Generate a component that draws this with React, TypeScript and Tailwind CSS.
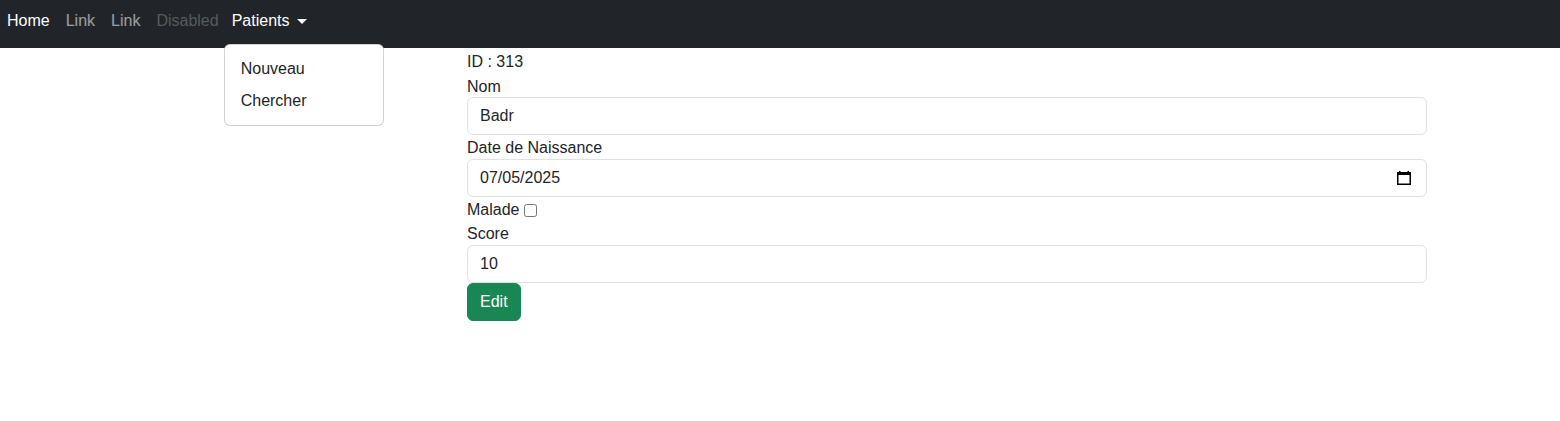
export default function App() {
  return (
    <div className="min-h-screen bg-white text-[#212529] text-base leading-6 font-['Segoe_UI','Liberation_Sans',sans-serif]">
      {/* Navbar */}
      <nav className="bg-[#212529] h-12 relative">
        <ul className="flex pt-[9px]">
          <li>
            <a className="block pl-[7px] pr-2 text-white">Home</a>
          </li>
          <li>
            <a className="block px-2 text-white/55">Link</a>
          </li>
          <li>
            <a className="block px-2 text-white/55">Link</a>
          </li>
          <li>
            <a className="block pl-2 pr-[6px] text-white/25">Disabled</a>
          </li>
          <li className="relative">
            <a className="flex items-center pl-[7px] pr-2 text-white">
              Patients
              <span className="ml-[8px] inline-block w-0 h-0 border-t-[5px] border-t-white border-x-[5px] border-x-transparent" />
            </a>
            <div className="absolute left-[-1px] top-[35px] w-40 bg-white border border-black/[0.175] rounded-md py-2 z-10">
              <a className="block px-4 py-1 text-[#212529]">Nouveau</a>
              <a className="block px-4 py-1 text-[#212529]">Chercher</a>
            </div>
          </li>
        </ul>
      </nav>

      {/* Form */}
      <div className="ml-[467px] w-[960px] pt-px">
        <div className="pt-px -mb-px">ID : 313</div>
        <label className="block pt-[2px] -mb-[2px]">Nom</label>
        <input
          type="text"
          defaultValue="Badr"
          className="block w-full h-[38px] px-3 border border-[#dee2e6] rounded-md outline-none"
        />
        <label className="block pt-px -mb-px">Date de Naissance</label>
        <div className="relative">
          <input
            type="text"
            defaultValue="07/05/2025"
            className="block w-full h-[38px] px-3 border border-[#dee2e6] rounded-md outline-none"
          />
          <svg
            className="absolute right-[16px] top-[12px]"
            width="14"
            height="14"
            viewBox="0 0 14 14"
          >
            <rect x="0.75" y="1.75" width="12.5" height="11.5" fill="none" stroke="#000" strokeWidth="1.5" />
            <rect x="0" y="1" width="14" height="3" fill="#000" />
            <rect x="2" y="0" width="1.5" height="2" fill="#000" />
            <rect x="10.5" y="0" width="1.5" height="2" fill="#000" />
          </svg>
        </div>
        <div className="flex items-center pt-px -mb-px">
          <label>Malade</label>
          <input type="checkbox" className="ml-[5px] w-[13px] h-[13px]" />
        </div>
        <label className="block pt-px -mb-px">Score</label>
        <input
          type="text"
          defaultValue="10"
          className="block w-full h-[38px] px-3 border border-[#dee2e6] rounded-md outline-none"
        />
        <button className="h-[38px] px-3 bg-[#198754] text-white rounded-md border border-[#198754]">
          Edit
        </button>
      </div>
    </div>
  );
}
